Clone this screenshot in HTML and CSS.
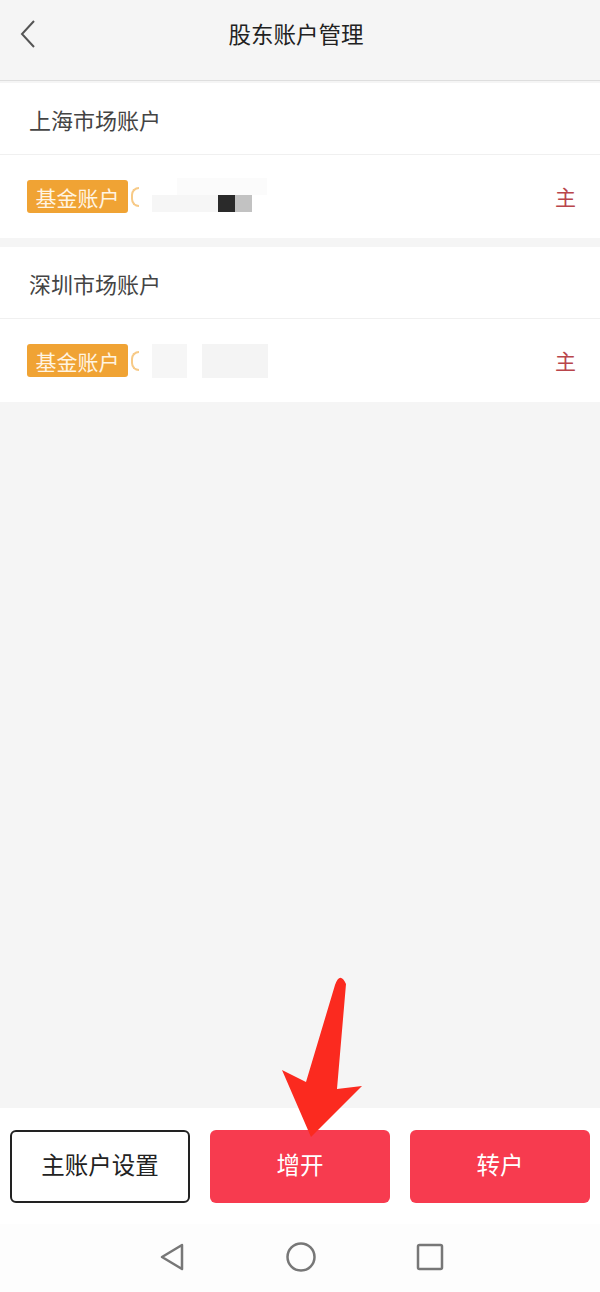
FILE: index.html
```html
<!DOCTYPE html>
<html lang="zh-CN">
<head>
    <meta charset="UTF-8">
    <title>股东账户管理</title>
    <link rel="stylesheet" href="styles.css">
</head>
<body>
    <div class="page">
        <div class="top-bar">
            <svg class="back-icon" width="18" height="30" viewBox="0 0 18 30">
                <path d="M15 2 L3 15 L15 28" fill="none" stroke="#555" stroke-width="2"/>
            </svg>
            <h1>股东账户管理</h1>
        </div>

        <div class="market">
            <div class="market-title">上海市场账户</div>
            <div class="account-row">
                <span class="badge">基金账户</span>
                <span class="bracket"></span>
                <div class="masked">
                    <span class="blur blur-top"></span>
                    <span class="blur blur-low"></span>
                    <span class="pix pix-dark"></span>
                    <span class="pix pix-grey"></span>
                </div>
                <span class="main-tag">主</span>
            </div>
        </div>

        <div class="market">
            <div class="market-title">深圳市场账户</div>
            <div class="account-row">
                <span class="badge">基金账户</span>
                <span class="bracket"></span>
                <div class="masked">
                    <span class="blur blur-a"></span>
                    <span class="blur blur-b"></span>
                </div>
                <span class="main-tag">主</span>
            </div>
        </div>

        <div class="filler"></div>

        <div class="actions">
            <button class="btn btn-outline">主账户设置</button>
            <button class="btn btn-red">增开</button>
            <button class="btn btn-red">转户</button>
        </div>

        <div class="nav-bar">
            <svg width="28" height="30" viewBox="0 0 28 30">
                <path d="M24 3 L4 15 L24 27 Z" fill="none" stroke="#777" stroke-width="2.5" stroke-linejoin="round"/>
            </svg>
            <svg width="32" height="32" viewBox="0 0 32 32">
                <circle cx="16" cy="16" r="13.5" fill="none" stroke="#777" stroke-width="2.5"/>
            </svg>
            <svg width="28" height="28" viewBox="0 0 28 28">
                <rect x="2" y="2" width="24" height="24" rx="1.5" fill="none" stroke="#777" stroke-width="2.5"/>
            </svg>
        </div>

        <!-- red annotation arrow drawn over the screenshot -->
        <svg class="arrow" width="600" height="1292" viewBox="0 0 600 1292">
            <path d="M335 985 Q340 971 346 984 L337 1089 L362 1086 L311 1137 L282 1070 L306 1082 Z" fill="#fb2a1f"/>
        </svg>
    </div>
</body>
</html>
```

FILE: styles.css
```css
body {
    margin: 0;
    padding: 0;
    font-family: "Noto Sans CJK SC", "Noto Sans", sans-serif;
    background-color: #f5f5f5;
}

.page {
    position: relative;
    width: 600px;
    height: 1292px;
    display: flex;
    flex-direction: column;
    overflow: hidden;
}

.top-bar {
    position: relative;
    height: 81px;
    flex-shrink: 0;
    background-color: #f5f5f5;
    border-bottom: 1px solid #dedede;
    display: flex;
    align-items: center;
    justify-content: center;
    box-sizing: border-box;
    padding: 0 8px 13px 0;
}

.top-bar h1 {
    margin: 0;
    font-size: 22.5px;
    font-weight: normal;
    line-height: 1;
    color: #222;
}

.back-icon {
    position: absolute;
    left: 19px;
    top: 19px;
}

.market {
    background-color: #fff;
    margin-top: 2px;
}

.market + .market {
    margin-top: 9px;
}

.market-title {
    height: 71px;
    padding-left: 29px;
    display: flex;
    align-items: center;
    font-size: 22px;
    color: #444;
    border-bottom: 1px solid #f0f0f0;
}

.account-row {
    height: 83px;
    padding: 0 24px 0 27px;
    display: flex;
    align-items: center;
}

.badge {
    width: 101px;
    height: 33px;
    display: flex;
    align-items: center;
    justify-content: center;
    background-color: #f0a334;
    color: #fff4e2;
    font-size: 21px;
    border-radius: 3px;
}

.bracket {
    width: 6px;
    height: 16px;
    margin-left: 3px;
    border: 2px solid #f5b455;
    border-right: none;
    border-radius: 10px 0 0 10px;
    opacity: 0.7;
}

.masked {
    position: relative;
    width: 120px;
    height: 34px;
    margin-left: 13px;
    flex: 1;
}

.blur {
    position: absolute;
    background-color: #f6f6f6;
}

.blur-top {
    left: 25px;
    top: -2px;
    width: 90px;
    height: 17px;
    background-color: #fbfbfb;
}

.blur-low {
    left: 0;
    top: 15px;
    width: 66px;
    height: 17px;
}

.pix {
    position: absolute;
    top: 15px;
    width: 17px;
    height: 17px;
}

.pix-dark {
    left: 66px;
    background-color: #2a2a2a;
}

.pix-grey {
    left: 83px;
    background-color: #c2c2c2;
}

.blur-a {
    left: 0;
    top: 0;
    width: 35px;
    height: 34px;
}

.blur-b {
    left: 50px;
    top: 0;
    width: 66px;
    height: 34px;
    background-color: #f4f4f4;
}

.main-tag {
    font-size: 21px;
    color: #b9454b;
    padding-bottom: 2px;
}

.filler {
    flex: 1;
    background-color: #f5f5f5;
}

.actions {
    background-color: #fff;
    padding: 22px 10px 21px;
    display: flex;
    gap: 20px;
}

.btn {
    width: 180px;
    height: 73px;
    padding: 0 0 6px;
    font-family: "Noto Sans CJK SC", "Noto Sans", sans-serif;
    font-size: 23.5px;
    border-radius: 6px;
    cursor: pointer;
}

.btn-outline {
    background-color: #fff;
    color: #222;
    border: 2px solid #222;
}

.btn-red {
    background-color: #f73b4f;
    color: #fff;
    border: none;
}

.nav-bar {
    height: 66px;
    background-color: #fdfdfd;
    display: flex;
    align-items: center;
    justify-content: center;
    gap: 99px;
    padding: 0 0 2px 2px;
}

.arrow {
    position: absolute;
    left: 0;
    top: 0;
    pointer-events: none;
}
```
